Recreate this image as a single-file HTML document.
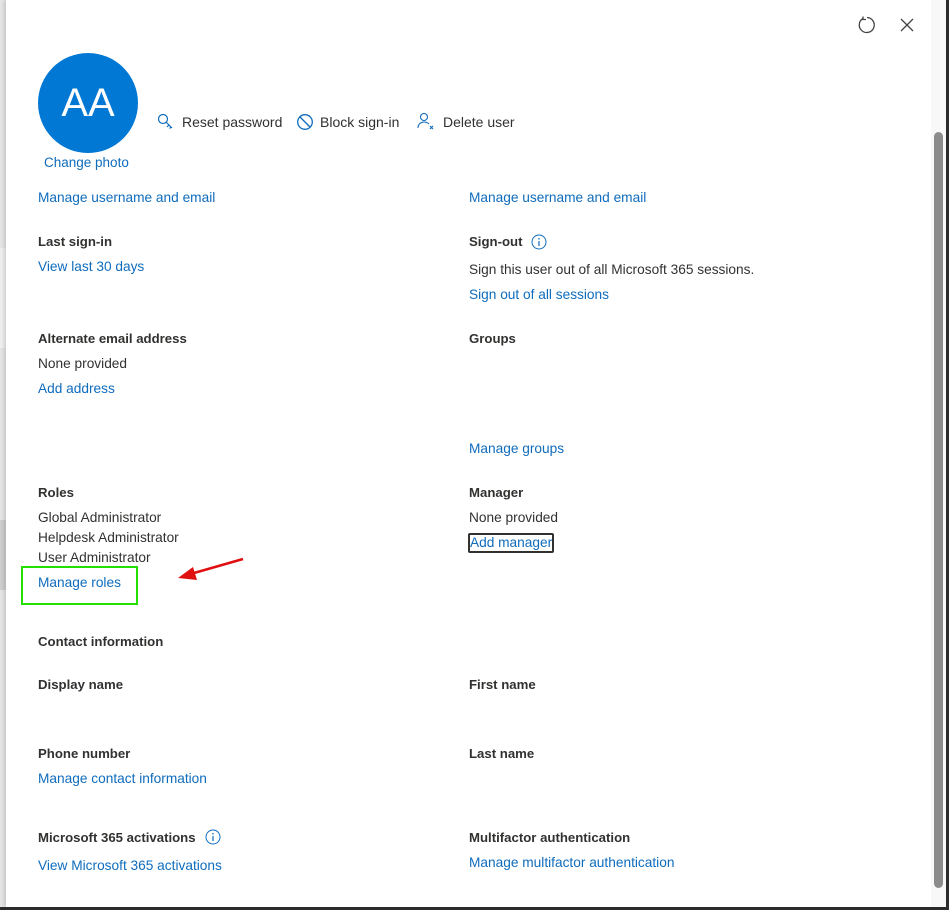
<!DOCTYPE html>
<html><head><style>
body{margin:0;width:949px;height:910px;overflow:hidden;background:#fff;font-family:"Liberation Sans",sans-serif;font-size:13.7px;color:#323130;position:relative}
.a{position:absolute;white-space:nowrap}
.h{font-weight:bold;color:#323130;font-size:13.2px}
.l{color:#0f6cbd}
</style></head><body>
<div class="a" style="left:0;top:0;width:6px;height:910px;background:#e6e6e6"></div>
<div class="a" style="left:0;top:248px;width:6px;height:100px;background:#f0f0f0"></div>
<div class="a" style="left:0;top:520px;width:6px;height:70px;background:#cfcfcf"></div>
<div class="a" style="left:6px;top:0;width:940px;height:907px;background:#fff;box-shadow:-2px 0 4px rgba(0,0,0,.15)"></div>
<div class="a" style="left:946px;top:0;width:3px;height:910px;background:#2b2b2b"></div>
<div class="a" style="left:0;top:907px;width:949px;height:3px;background:#2b2b2b"></div>
<div class="a" style="left:931px;top:0;width:15px;height:907px;background:#f8f8f8"></div>
<div class="a" style="left:934px;top:132px;width:9px;height:756px;background:#8b8b8b;border-radius:5px"></div>
<svg class="a" style="left:857px;top:15px" width="20" height="20" viewBox="0 0 20 20"><path d="M6 3.5A7.5 7.5 0 1 0 10 2.5" fill="none" stroke="#444" stroke-width="1.3"/><path d="M6 1.5v3h3" fill="none" stroke="#444" stroke-width="1.3"/></svg>
<svg class="a" style="left:900px;top:18px" width="14" height="14"><path d="M1 1L13 13M13 1L1 13" stroke="#444" stroke-width="1.3"/></svg>
<div class="a" style="left:38px;top:53px;width:100px;height:100px;border-radius:50%;background:#0078d4;color:#fff;font-size:40px;line-height:100px;text-align:center">AA</div>
<div class="a l" style="left:44px;top:155px;font-size:13.5px">Change photo</div>
<svg class="a" style="left:157px;top:113px" width="18" height="18" viewBox="0 0 18 18"><circle cx="6" cy="6" r="4.5" fill="none" stroke="#0f6cbd" stroke-width="1.2"/><path d="M9 9l6 6M12 12l-2 2M14 14l-1.5 1.5" stroke="#0f6cbd" stroke-width="1.2" fill="none"/></svg>
<div class="a" style="left:182px;top:114px;font-size:14px">Reset password</div>
<svg class="a" style="left:296px;top:113px" width="18" height="18"><circle cx="9" cy="9" r="7.3" fill="none" stroke="#0f6cbd" stroke-width="1.3"/><path d="M4 4l10 10" stroke="#0f6cbd" stroke-width="1.3"/></svg>
<div class="a" style="left:320px;top:114px;font-size:14px">Block sign-in</div>
<svg class="a" style="left:417px;top:112px" width="20" height="20"><circle cx="7" cy="5" r="3.5" fill="none" stroke="#0f6cbd" stroke-width="1.1"/><path d="M1 16c0-4 3-6 6-6s4 1 5 2" fill="none" stroke="#0f6cbd" stroke-width="1.1"/><path d="M13 14l3 3M16 14l-3 3" stroke="#0f6cbd" stroke-width="1.1"/></svg>
<div class="a" style="left:443px;top:114px;font-size:14px">Delete user</div>

<div class="a l" style="left:38px;top:190px">Manage username and email</div>
<div class="a l" style="left:469px;top:190px">Manage username and email</div>

<div class="a h" style="left:38px;top:234px">Last sign-in</div>
<div class="a l" style="left:38px;top:259px">View last 30 days</div>
<div class="a h" style="left:469px;top:234px">Sign-out</div>
<svg class="a" style="left:531px;top:234px" width="16" height="16"><circle cx="8" cy="8" r="7" fill="none" stroke="#0f6cbd" stroke-width="1"/><path d="M8 7v5" stroke="#0f6cbd" stroke-width="1.2"/><circle cx="8" cy="4.8" r=".8" fill="#0f6cbd"/></svg>
<div class="a" style="left:469px;top:262px">Sign this user out of all Microsoft 365 sessions.</div>
<div class="a l" style="left:469px;top:287px">Sign out of all sessions</div>

<div class="a h" style="left:38px;top:331px">Alternate email address</div>
<div class="a" style="left:38px;top:356px">None provided</div>
<div class="a l" style="left:38px;top:381px">Add address</div>
<div class="a h" style="left:469px;top:331px">Groups</div>
<div class="a l" style="left:469px;top:441px">Manage groups</div>

<div class="a h" style="left:38px;top:485px">Roles</div>
<div class="a" style="left:38px;top:510px">Global Administrator</div>
<div class="a" style="left:38px;top:530px">Helpdesk Administrator</div>
<div class="a" style="left:38px;top:550px">User Administrator</div>
<div class="a l" style="left:38px;top:575px">Manage roles</div>
<div class="a" style="left:21px;top:566px;width:113px;height:35px;border:2.5px solid #22e000"></div>
<svg class="a" style="left:175px;top:555px" width="75" height="30"><path d="M68 4L12 20" stroke="#e01010" stroke-width="2.5"/><path d="M3 23L18 12L22 25Z" fill="#e01010"/></svg>
<div class="a h" style="left:469px;top:485px">Manager</div>
<div class="a" style="left:469px;top:510px">None provided</div>
<div class="a l" style="left:468px;top:533px;border:2px solid #323130;border-radius:2px;line-height:16px;width:82px">Add manager</div>

<div class="a h" style="left:38px;top:634px">Contact information</div>
<div class="a h" style="left:38px;top:677px">Display name</div>
<div class="a h" style="left:469px;top:677px">First name</div>
<div class="a h" style="left:38px;top:746px">Phone number</div>
<div class="a l" style="left:38px;top:771px">Manage contact information</div>
<div class="a h" style="left:469px;top:746px">Last name</div>
<div class="a h" style="left:38px;top:830px">Microsoft 365 activations</div>
<svg class="a" style="left:205px;top:829px" width="16" height="16"><circle cx="8" cy="8" r="7" fill="none" stroke="#0f6cbd" stroke-width="1"/><path d="M8 7v5" stroke="#0f6cbd" stroke-width="1.2"/><circle cx="8" cy="4.8" r=".8" fill="#0f6cbd"/></svg>
<div class="a l" style="left:38px;top:858px">View Microsoft 365 activations</div>
<div class="a h" style="left:469px;top:830px">Multifactor authentication</div>
<div class="a l" style="left:469px;top:855px">Manage multifactor authentication</div>
</body></html>
